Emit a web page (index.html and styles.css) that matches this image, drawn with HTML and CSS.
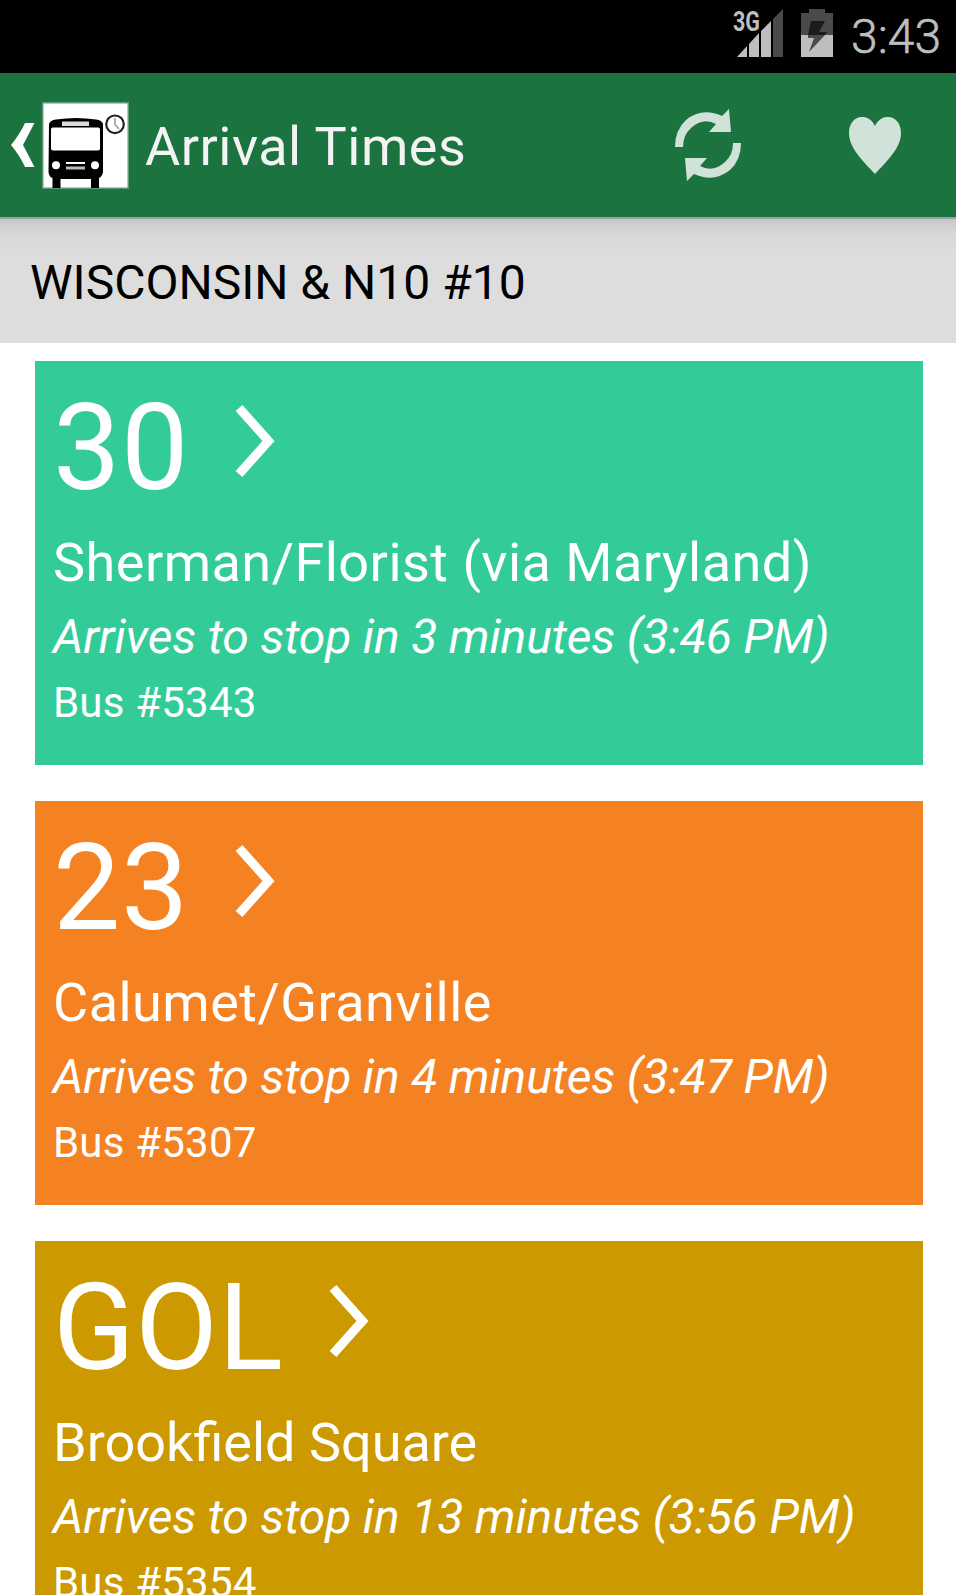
FILE: index.html
```html
<!DOCTYPE html>
<html lang="en">
<head>
    <meta charset="UTF-8">
    <meta name="viewport" content="width=device-width, initial-scale=1.0">
    <title>Arrival Times</title>
    <link rel="stylesheet" href="styles.css">
</head>
<body>
    <div class="status-bar">
        <svg class="signal" width="52" height="50" viewBox="0 0 52 50">
            <text class="network" x="1" y="23" textLength="27" lengthAdjust="spacingAndGlyphs">3G</text>
            <path fill="#bebebe" d="M5 49 L15 38 V49 Z M17 49 V36 L27 25 V49 Z M29 49 V23 L39 13 V49 Z"/>
            <path fill="#4a4a4a" d="M41 49 V11 L51 1 V49 Z"/>
        </svg>
        <svg class="battery" width="32" height="48" viewBox="0 0 32 48">
            <path fill="#4a4a4a" d="M0 4 H8 V0 H24 V4 H32 V26 H0 Z"/>
            <path fill="#bebebe" d="M0 26 H32 V48 H0 Z"/>
            <path fill="#1c1c1c" d="M10 12 H24 L18 23 H26 L24 26 H7 Z"/>
            <path fill="#4a4a4a" d="M14 26 H24 L8 43 L13 29 H7 V26 Z"/>
        </svg>
        <span class="clock">3:43</span>
    </div>

    <div class="action-bar">
        <svg class="back" width="24" height="46" viewBox="0 0 24 46">
            <path fill="#fff" d="M14 1 H23.500 L12 23 L23.500 45 H14 Q9 34 0 23 Q9 12 14 1 Z"/>
        </svg>
        <svg class="logo" width="87" height="87" viewBox="0 0 87 87">
            <rect width="87" height="87" fill="#fff"/>
            <rect x=".75" y=".75" width="85.500" height="85.500" fill="none" stroke="#5c9d76" stroke-width="1.500"/>
            <path d="M7 22 Q8 18 14 17.500 Q34 14.500 54 17.500 Q60 18 61 22 V70 Q60 75 57 76 V86 H49 V77 H18.500 V86 H10.500 V76 Q7 75 6.500 70 Z"/>
            <rect x="9" y="25.500" width="49" height="23" rx="2" fill="#fff"/>
            <rect x="20" y="19.500" width="27" height="4.500" fill="#ddd"/>
            <circle cx="14" cy="63.300" r="4" fill="#fff"/>
            <circle cx="53" cy="63.300" r="4" fill="#fff"/>
            <path stroke="#fff" stroke-width="2" d="M24 61 H43"/>
            <path stroke="#bbb" stroke-width="3" d="M24 66 H43"/>
            <circle cx="73" cy="22.300" r="8.800" fill="#fff" stroke="#222" stroke-width="2.200"/>
            <path fill="none" stroke="#999" stroke-width="1.500" d="M73 16 V22.500 L77 27"/>
        </svg>
        <h1 class="title">Arrival Times</h1>
        <svg class="refresh" width="68" height="74" viewBox="0 0 68 74">
            <g id="arrow" fill="#d1e3d9">
                <path d="M1 39 Q1 22 12 12 Q28 -1 48 8 L55 1 L57 24 H35 L42 16 Q29 9 17 20 Q9 27 9 39 Z"/>
            </g>
            <use href="#arrow" transform="rotate(180 34 37)"/>
        </svg>
        <svg class="favorite" width="52" height="57" viewBox="0 0 52 57">
            <path fill="#d1e3d9" d="M26 9 C22 1 17 0 13 0 C5 0 0 7 0 16 C0 31 14 44 26 57 C38 44 52 31 52 16 C52 7 47 0 39 0 C35 0 30 1 26 9 Z"/>
        </svg>
    </div>

    <div class="stop-name"><span>WISCONSIN &amp; N10 #10</span></div>

    <div class="arrivals">
        <div class="card green">
            <div class="route">
                <span class="route-id">30</span>
                <svg class="chevron" width="40" height="72" viewBox="0 0 40 72"><path d="M4 3 L33.500 36 L4 69"/></svg>
            </div>
            <div class="destination spaced">Sherman/Florist (via Maryland)</div>
            <div class="arrives">Arrives to stop in 3 minutes (3:46 PM)</div>
            <div class="bus">Bus #5343</div>
        </div>
        <div class="card orange">
            <div class="route">
                <span class="route-id">23</span>
                <svg class="chevron" width="40" height="72" viewBox="0 0 40 72"><path d="M4 3 L33.500 36 L4 69"/></svg>
            </div>
            <div class="destination spaced">Calumet/Granville</div>
            <div class="arrives">Arrives to stop in 4 minutes (3:47 PM)</div>
            <div class="bus">Bus #5307</div>
        </div>
        <div class="card gold">
            <div class="route">
                <span class="route-id">GOL</span>
                <svg class="chevron" width="40" height="72" viewBox="0 0 40 72"><path d="M4 3 L33.500 36 L4 69"/></svg>
            </div>
            <div class="destination">Brookfield Square</div>
            <div class="arrives">Arrives to stop in 13 minutes (3:56 PM)</div>
            <div class="bus">Bus #5354</div>
        </div>
    </div>
</body>
</html>
```

FILE: styles.css
```css
* {
    margin: 0;
    padding: 0;
    box-sizing: border-box;
}

body {
    font-family: Roboto, "Liberation Sans", sans-serif;
    background: #fff;
    height: 1595px;
    overflow: hidden;
}

svg {
    display: block;
    flex: none;
    overflow: visible;
}

/* Status bar */
.status-bar {
    display: flex;
    justify-content: flex-end;
    height: 73px;
    padding: 8px 15px 0 0;
    background: #000;
}

.network {
    font-size: 27px;
    font-weight: 700;
    fill: #bebebe;
}

.battery {
    margin: 1px 0 0 17px;
}

.clock {
    margin-left: 18px;
    font-size: 48px;
    font-weight: 300;
    line-height: 57px;
    color: #bebebe;
    -webkit-text-stroke: 0.6px #bebebe;
}

/* Action bar */
.action-bar {
    display: flex;
    align-items: center;
    height: 144px;
    padding: 0 55px 0 11px;
    background: #1b7340;
}

.logo {
    margin-left: 7px;
}

.title {
    flex: 1;
    margin: 2px 0 0 16px;
    font-size: 54px;
    font-weight: 400;
    letter-spacing: 0.5px;
    color: #f3f3f3;
}

.favorite {
    margin-left: 107px;
}

/* Stop name */
.stop-name {
    height: 126px;
    padding: 37px 30px 0;
    background: linear-gradient(#9f9f9f 0, #9f9f9f 2px, #c2c2c2 2px, #d0d0d0 8px, #d8d8d8 18px, #ddd 36px);
    font-size: 48px;
    line-height: 58px;
    color: #000;
}

/* Arrival cards */
.arrivals {
    display: flex;
    flex-direction: column;
    gap: 36px;
    padding: 18px 33px 0 35px;
}

.card {
    height: 404px;
    padding: 17px 18px 0;
    color: #fff;
    white-space: nowrap;
}

.green { background: #33cc99; }
.orange { background: #f58222; }
.gold { background: #cc9900; }

.route {
    display: flex;
    align-items: flex-start;
}

.route-id {
    font-size: 120px;
    line-height: 141px;
    letter-spacing: 0.5px;
}

.chevron {
    margin: 27px 0 0 46px;
}

.chevron path {
    fill: none;
    stroke: #fff;
    stroke-width: 9;
}

.destination {
    margin-top: 12px;
    font-size: 54px;
    line-height: 64px;
}

.destination.spaced {
    letter-spacing: 0.48px;
}

.arrives {
    margin-top: 13px;
    font-size: 48px;
    font-style: italic;
    line-height: 58px;
    letter-spacing: -0.16px;
}

.bus {
    margin-top: 12px;
    font-size: 42px;
    line-height: 50px;
    letter-spacing: 0.2px;
}
```
